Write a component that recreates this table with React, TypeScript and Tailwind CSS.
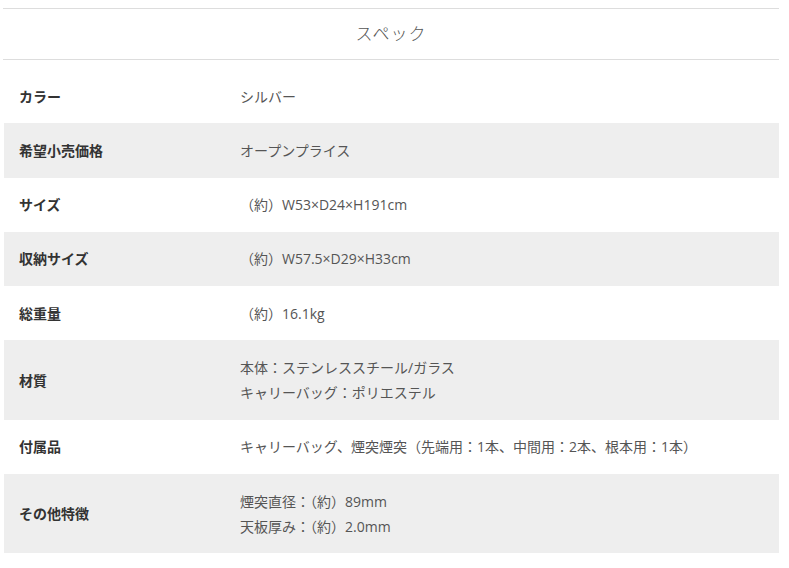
const specs: { label: string; value: string[] }[] = [
  { label: "カラー", value: ["シルバー"] },
  { label: "希望小売価格", value: ["オープンプライス"] },
  { label: "サイズ", value: ["（約）W53×D24×H191cm"] },
  { label: "収納サイズ", value: ["（約）W57.5×D29×H33cm"] },
  { label: "総重量", value: ["（約）16.1kg"] },
  { label: "材質", value: ["本体：ステンレススチール/ガラス", "キャリーバッグ：ポリエステル"] },
  { label: "付属品", value: ["キャリーバッグ、煙突煙突（先端用：1本、中間用：2本、根本用：1本）"] },
  { label: "その他特徴", value: ["煙突直径：（約）89mm", "天板厚み：（約）2.0mm"] },
];

export default function App() {
  return (
    <div
      className="min-h-screen bg-white pt-2 pl-[3px] pr-[10px]"
      style={{ fontFamily: '"Open Sans", "Noto Sans CJK JP", sans-serif' }}
    >
      {/* HEADER */}
      <div className="border-t border-b border-[#dddddd] h-[52px] flex items-center justify-center">
        <h2 className="text-[17px] font-light tracking-[1px] text-[#555555]">スペック</h2>
      </div>

      {/* TABLE */}
      <div className="mt-[9px] ml-px">
        {specs.map((row, i) => (
          <div
            key={row.label}
            className={`grid grid-cols-[236px_1fr] items-center py-[14.65px] ${
              i % 2 === 1 ? "bg-[#eeeeee]" : "bg-white"
            }`}
          >
            <div className="pl-[15px] text-[14px] leading-[25px] font-bold text-[#333333]">
              {row.label}
            </div>
            <div className="text-[14px] leading-[25px] text-[#555555]">
              {row.value.map((v) => (
                <div key={v}>{v}</div>
              ))}
            </div>
          </div>
        ))}
      </div>
    </div>
  );
}
